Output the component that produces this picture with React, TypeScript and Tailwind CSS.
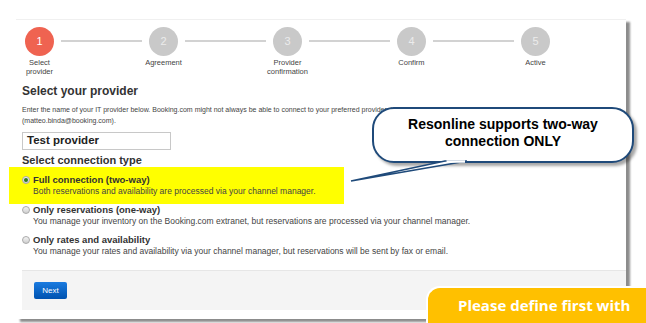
const steps = [
  { n: "1", label: ["Select", "provider"], active: true },
  { n: "2", label: ["Agreement"] },
  { n: "3", label: ["Provider", "confirmation"] },
  { n: "4", label: ["Confirm"] },
  { n: "5", label: ["Active"] },
];

const options = [
  {
    title: "Full connection (two-way)",
    text: "Both reservations and availability are processed via your channel manager.",
    checked: true,
  },
  {
    title: "Only reservations (one-way)",
    text: "You manage your inventory on the Booking.com extranet, but reservations are processed via your channel manager.",
  },
  {
    title: "Only rates and availability",
    text: "You manage your rates and availability via your channel manager, but reservations will be sent by fax or email.",
  },
];

function Radio({ checked }: { checked?: boolean }) {
  return (
    <span className="mt-[2px] flex h-[8px] w-[8px] flex-none items-center justify-center rounded-full border border-[#a9a9a9] bg-gradient-to-b from-[#f4f4f4] to-[#cfcfcf]">
      {checked && <span className="h-[4px] w-[4px] rounded-full bg-[#2f7a1f]" />}
    </span>
  );
}

export default function App() {
  return (
    <div className="relative h-[323px] w-[646px] overflow-hidden bg-white font-['Liberation_Sans',Arial,sans-serif] text-[#333]">
      <div className="ml-[16px] mt-[19px] h-[300px] w-[610px] border-t border-[#f0f0f0] bg-white shadow-[4px_3px_2px_rgba(0,0,0,0.45)]">
        {/* steps */}
        <div className="flex items-start pl-[9px] pt-[7px]">
          {steps.map((s, i) => (
            <div key={s.n} className="flex items-start">
              {i > 0 && <div className="mx-[7px] mt-[13px] h-[2px] w-[81px] bg-[#d2d2d2]" />}
              <div className="flex w-[29px] flex-col items-center">
                <div
                  className={
                    "flex h-[29px] w-[29px] items-center justify-center rounded-full text-[11px] " +
                    (s.active ? "bg-[#ef6351] text-white" : "bg-[#c9c9c9] text-[#ececec]")
                  }
                >
                  {s.n}
                </div>
                <div className="mt-[2px] whitespace-nowrap text-center text-[7.5px] leading-[9px] text-[#444]">
                  {s.label.map((l) => (
                    <div key={l}>{l}</div>
                  ))}
                </div>
              </div>
            </div>
          ))}
        </div>

        <div className="pl-[6px]">
          <h1 className="mt-[8px] text-[12px] font-bold leading-[14px] text-[#333]">Select your provider</h1>
          <p className="mt-[6px] w-[600px] text-[7px] leading-[11px] text-[#444]">
            Enter the name of your IT provider below. Booking.com might not always be able to connect to your preferred
            provider. If your provider isn't listed, contact your Booking.com account team (matteo.binda@booking.com).
          </p>
          <div className="mt-[6px] flex h-[18px] w-[149px] items-center border border-[#c8c8c8] px-[4px] text-[11.5px] font-bold text-[#222]">
            Test provider
          </div>
          <h2 className="mt-[3px] text-[11px] font-bold leading-[14px] text-[#333]">Select connection type</h2>
        </div>

        <div>
          {options.map((o) => (
            <div
              key={o.title}
              className={
                "flex gap-[3px] pl-[6px] " +
                (o.checked ? "-ml-[7px] h-[37px] w-[335px] bg-[#ffff00] pl-[13px] pt-[7px]" : "h-[30px]")
              }
            >
              <Radio checked={o.checked} />
              <div>
                <div className="text-[9.5px] font-bold leading-[11px] text-[#333]">{o.title}</div>
                <div className="text-[8.5px] leading-[12px] text-[#444]">{o.text}</div>
              </div>
            </div>
          ))}
        </div>

        <div className="ml-[6px] mt-[6px] h-[40px] border-t border-[#e6e6e6] bg-[#f4f4f4] pl-[12px] pt-[11px]">
          <button className="block h-[17px] w-[33px] rounded-[2px] bg-gradient-to-b from-[#1a7be0] to-[#0052b0] text-center text-[8px] leading-[17px] text-white">
            Next
          </button>
        </div>
      </div>

      {/* callout */}
      <div className="absolute left-[372px] top-[107px] flex h-[56px] w-[262px] flex-col items-center rounded-[22px] border-2 border-[#1f4a7a] bg-white pt-[7px] text-center text-[14px] font-bold leading-[17px] text-black shadow-[3px_3px_3px_rgba(0,0,0,0.35)]">
        <div>Resonline supports two-way</div>
        <div>connection ONLY</div>
      </div>
      <svg className="pointer-events-none absolute left-0 top-0" width="646" height="323">
        <polygon points="445,161 351,181 467,161" fill="white" stroke="#1f4a7a" strokeWidth="1.6" strokeLinejoin="miter" />
        <line x1="446.5" y1="161.5" x2="465" y2="161.5" stroke="white" strokeWidth="2.5" />
      </svg>

      {/* orange note */}
      <div className="absolute left-[426px] top-[286px] h-[40px] w-[224px] rounded-tl-[14px] border-l-2 border-t-2 border-white bg-[#ffc000] pl-[30px] pt-[6px] font-['Open_Sans',sans-serif] text-[15px] font-bold text-white">
        Please define first with
      </div>
    </div>
  );
}
